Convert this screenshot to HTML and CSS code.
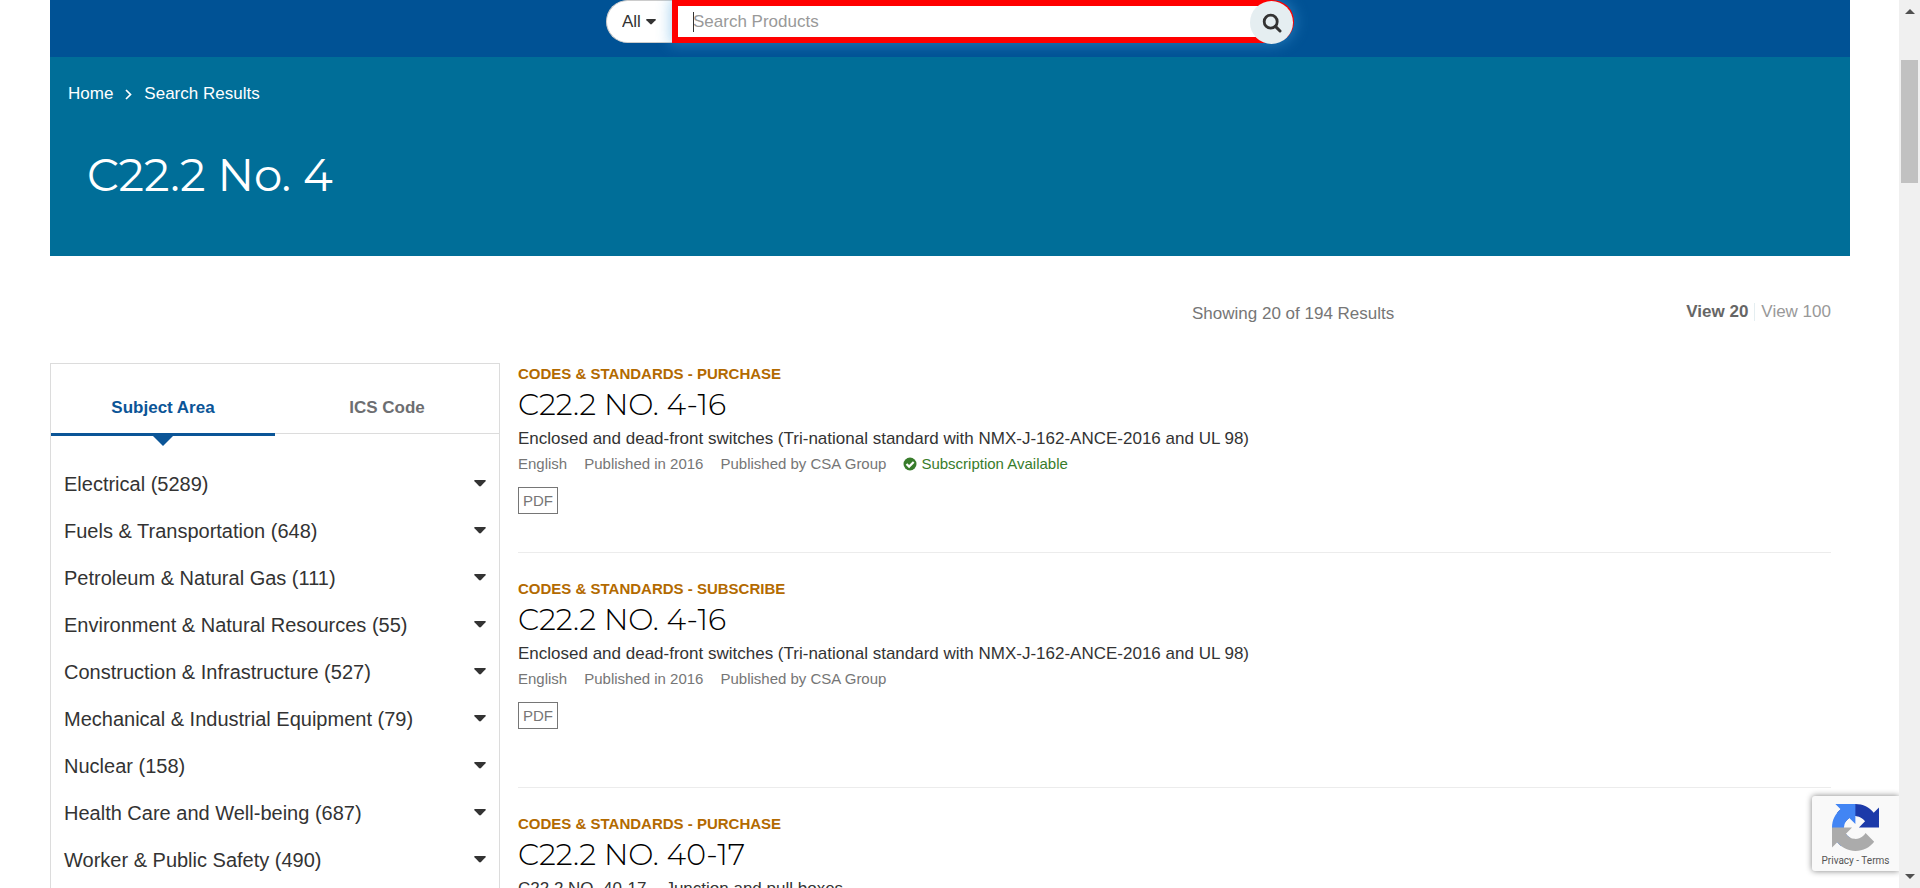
FILE: index.html
```html
<!DOCTYPE html>
<html lang="en">
<head>
<meta charset="utf-8">
<title>C22.2 No. 4 - Search Results</title>
<link rel="stylesheet" href="styles.css">
</head>
<body>
<svg class="defs" aria-hidden="true">
  <symbol id="caret" viewBox="0 0 12 7"><path d="M1 0h10q1.400.2.500 1.300L7 6q-1 .900-2 0L.5 1.300Q-.4.200 1 0z" fill="currentColor"/></symbol>
</svg>
<div class="window">
  <div class="page">
    <div class="container">
      <header class="topbar">
        <form class="search" role="search">
          <div class="scope">
            <select class="scope-select" aria-label="Search in"><option>All</option></select>
            <svg class="scope-caret"><use href="#caret"/></svg>
          </div>
          <div class="field">
            <input class="field-input" type="text" placeholder="Search Products" aria-label="Search Products">
            <button class="search-btn" type="button" aria-label="Search">
              <svg class="search-icon" viewBox="0 0 20 20"><circle cx="8.700" cy="8.700" r="6.500" fill="none" stroke="#333" stroke-width="2.800"/><path d="M13.400 13.400L18 18" stroke="#333" stroke-width="3" stroke-linecap="round"/></svg>
            </button>
          </div>
        </form>
      </header>
      <section class="hero">
        <nav class="crumbs" aria-label="Breadcrumb">
          <a href="#">Home</a>
          <svg class="crumb-sep" viewBox="0 0 7 11"><path d="M1 1l4.500 4.500L1 10" fill="none" stroke="#fff" stroke-width="1.700"/></svg>
          <a href="#">Search Results</a>
        </nav>
        <h1 class="hero-title">C22.2 No. 4</h1>
      </section>
      <div class="toolbar">
        <p class="count">Showing 20 of 194 Results</p>
        <nav class="views" aria-label="Results per page">
          <a class="view view-on" href="#">View 20</a>
          <a class="view" href="#">View 100</a>
        </nav>
      </div>
      <div class="columns">
        <aside class="filters">
          <div class="tabs" role="tablist">
            <button class="tab tab-on" role="tab" aria-selected="true">Subject Area</button>
            <button class="tab" role="tab" aria-selected="false">ICS Code</button>
          </div>
          <ul class="subjects">
            <li><button class="subject">Electrical (5289)<svg class="subject-caret"><use href="#caret"/></svg></button></li>
            <li><button class="subject">Fuels &amp; Transportation (648)<svg class="subject-caret"><use href="#caret"/></svg></button></li>
            <li><button class="subject">Petroleum &amp; Natural Gas (111)<svg class="subject-caret"><use href="#caret"/></svg></button></li>
            <li><button class="subject">Environment &amp; Natural Resources (55)<svg class="subject-caret"><use href="#caret"/></svg></button></li>
            <li><button class="subject">Construction &amp; Infrastructure (527)<svg class="subject-caret"><use href="#caret"/></svg></button></li>
            <li><button class="subject">Mechanical &amp; Industrial Equipment (79)<svg class="subject-caret"><use href="#caret"/></svg></button></li>
            <li><button class="subject">Nuclear (158)<svg class="subject-caret"><use href="#caret"/></svg></button></li>
            <li><button class="subject">Health Care and Well-being (687)<svg class="subject-caret"><use href="#caret"/></svg></button></li>
            <li><button class="subject">Worker &amp; Public Safety (490)<svg class="subject-caret"><use href="#caret"/></svg></button></li>
          </ul>
        </aside>
        <main class="results">
          <article class="result">
            <p class="kind">CODES &amp; STANDARDS - PURCHASE</p>
            <h2 class="name"><a href="#">C22.2 NO. 4-16</a></h2>
            <p class="desc">Enclosed and dead-front switches (Tri-national standard with NMX-J-162-ANCE-2016 and UL 98)</p>
            <p class="meta"><span>English</span><span>Published in 2016</span><span>Published by CSA Group</span><span class="avail"><svg class="check" viewBox="0 0 14 14"><circle cx="7" cy="7" r="6.500" fill="#387c2b"/><path d="M3.500 7l2.600 2.600 4.600-4.600" fill="none" stroke="#fff" stroke-width="2.200"/></svg>Subscription Available</span></p>
            <span class="format">PDF</span>
          </article>
          <article class="result">
            <p class="kind">CODES &amp; STANDARDS - SUBSCRIBE</p>
            <h2 class="name"><a href="#">C22.2 NO. 4-16</a></h2>
            <p class="desc">Enclosed and dead-front switches (Tri-national standard with NMX-J-162-ANCE-2016 and UL 98)</p>
            <p class="meta"><span>English</span><span>Published in 2016</span><span>Published by CSA Group</span></p>
            <span class="format">PDF</span>
          </article>
          <article class="result">
            <p class="kind">CODES &amp; STANDARDS - PURCHASE</p>
            <h2 class="name"><a href="#">C22.2 NO. 40-17</a></h2>
            <p class="desc">C22.2 NO. 40-17 – Junction and pull boxes</p>
          </article>
        </main>
      </div>
    </div>
    <aside class="captcha">
      <svg class="captcha-logo" viewBox="0 0 64 64"><path d="M64 31.955l-.033-1.370V4.687l-7.160 7.160C50.948 4.674 42.033.093 32.050.093c-10.389 0-19.622 4.960-25.458 12.640l11.736 11.860a15.550 15.550 0 0 1 4.754-5.334c2.050-1.600 4.952-2.906 8.968-2.906.485 0 .860.057 1.135.163 4.976.393 9.288 3.140 11.828 7.124l-8.307 8.307L64 31.953" fill="#1c3aa9"/><path d="M31.862.094l-1.370.033H4.594l7.160 7.160C4.580 13.147 0 22.060 0 32.046c0 10.388 4.960 19.622 12.640 25.458L24.500 45.768a15.550 15.550 0 0 1-5.334-4.754c-1.600-2.050-2.906-4.952-2.906-8.968 0-.485.057-.860.163-1.135.393-4.976 3.140-9.288 7.124-11.828l8.307 8.307L31.860.095" fill="#4285f4"/><path d="M.001 32.045l.033 1.370v25.898l7.160-7.160c5.860 7.173 14.774 11.754 24.760 11.754 10.388 0 19.622-4.960 25.458-12.640l-11.736-11.860a15.550 15.550 0 0 1-4.754 5.334c-2.050 1.600-4.952 2.906-8.968 2.906-.485 0-.860-.057-1.135-.163-4.976-.393-9.288-3.140-11.828-7.124l8.307-8.307c-10.522.040-22.400.066-27.295-.005" fill="#ababab"/></svg>
      <div class="captcha-links"><a href="#">Privacy</a> - <a href="#">Terms</a></div>
    </aside>
  </div>
  <div class="scrollbar" aria-hidden="true">
    <svg class="scroll-arrow" viewBox="0 0 10 5"><path d="M5 0l5 5H0z" fill="#505050"/></svg>
    <div class="thumb"></div>
    <svg class="scroll-arrow scroll-down" viewBox="0 0 10 5"><path d="M0 0h10L5 5z" fill="#505050"/></svg>
  </div>
</div>
</body>
</html>
```
FILE: styles.css
```css
* { box-sizing: border-box; }
body {
  margin: 0;
  background: #fff;
  color: #333;
  font-family: Arial, "Liberation Sans", sans-serif;
  font-size: 17px;
  line-height: 24px;
}
a { color: inherit; text-decoration: none; }
p, h1, h2, ul { margin: 0; padding: 0; }
ul { list-style: none; }
button, input, select { font: inherit; }
svg { display: block; flex: none; }
.defs { position: absolute; width: 0; height: 0; }

.window { display: flex; height: 100vh; overflow: hidden; }
.page { position: relative; flex: 1; min-width: 0; overflow: hidden; }
.container { padding: 0 49px 0 50px; }

.topbar { display: flex; justify-content: center; height: 57px; background: #005295; }
.search { display: flex; width: 688px; height: 43px; }
.scope { position: relative; display: flex; align-items: center; width: 66px; background: #fff; border-radius: 22px 0 0 22px; border: 1px solid #ccc; border-right: 0; }
.scope-select { appearance: none; width: 100%; height: 100%; padding: 0 0 0 15px; border: 0; background: none; color: #333; }
.scope-caret { position: absolute; right: 16px; width: 10px; height: 6px; pointer-events: none; }
.field { position: relative; flex: 1; border: 6px solid #f00; border-right-width: 22px; border-radius: 0 22px 22px 0; background: #fff; box-shadow: 0 0 14px 2px rgba(74, 163, 223, .45); }
.field::after { content: ""; position: absolute; left: 15px; top: 6px; width: 1px; height: 20px; background: #333; }
.field-input { display: block; width: 100%; height: 100%; padding: 0 15px; border: 0; outline: 0; background: #fff; }
.field-input::placeholder { color: #999; opacity: 1; }
.search-btn { position: absolute; top: -5px; right: -21px; display: grid; place-items: center; width: 43px; height: 43px; padding: 0; border: 0; border-radius: 50%; background: #e5eef1; }
.search-icon { width: 20px; height: 20px; }

.hero { height: 199px; padding: 25px 18px; background: #006e98; color: #fff; }
.crumbs { display: flex; align-items: center; gap: 12px; }
.crumb-sep { width: 7px; height: 11px; }
.hero-title { padding: 41px 19px 0; font: 400 45px/56px Montserrat, Inter, sans-serif; }

.toolbar { display: flex; justify-content: flex-end; gap: 292px; padding: 44px 19px 0 0; height: 107px; color: #767676; }
.count { padding-top: 2px; }
.views { display: flex; align-items: center; height: 24px; }
.view { line-height: 18px; color: #999; }
.view-on { margin-right: 6px; padding-right: 6px; border-right: 1px solid #e5eef1; color: #666; font-weight: bold; }

.columns { display: grid; grid-template-columns: 1fr 3fr; }
.filters { border: 1px solid #dcdcdc; padding-bottom: 60px; }
.tabs { display: grid; grid-template-columns: 1fr 1fr; }
.tab { position: relative; height: 70px; padding: 18px 0 0; border: 0; border-bottom: 1px solid #dcdcdc; background: none; color: #6d6e71; font-weight: bold; }
.tab-on { height: 72px; margin-bottom: -2px; border-bottom: 3px solid #0b5597; color: #0b5597; }
.tab-on::after { content: ""; position: absolute; left: 50%; top: 100%; margin: 2px 0 0 -11px; border: 11px solid transparent; border-top-color: #0b5597; border-bottom: 0; }
.subjects { padding: 26px 13px 0; }
.subject { display: flex; justify-content: space-between; align-items: center; width: 100%; height: 47px; padding: 0; border: 0; background: none; color: #333; font-size: 20px; text-align: left; }
.subject-caret { width: 12px; height: 7px; }

.results { padding: 0 19px 0 18px; }
.result { height: 190px; border-bottom: 1px solid #ececec; }
.result + .result { height: 235px; padding-top: 25px; }
.kind { color: #b36a00; font-size: 15px; line-height: 22px; font-weight: bold; }
.name { margin-bottom: 1px; color: #000; font: 300 30px/40px Montserrat, Inter, sans-serif; }
.desc { line-height: 26px; }
.meta { display: flex; gap: 17px; color: #767676; font-size: 15px; }
.avail { display: flex; align-items: center; gap: 4px; color: #387c2b; }
.check { width: 14px; height: 14px; }
.format { display: inline-block; margin-top: 11px; padding: 0 4px; border: 1px solid #767676; color: #767676; font-size: 15px; line-height: 25px; }

.captcha { position: absolute; right: 0; bottom: 17px; display: flex; flex-direction: column; align-items: center; width: 87px; height: 75px; padding: 8px 0 0; border-radius: 3px 0 0 3px; background: #f9f9f9; box-shadow: 0 0 6px #808080; color: #555; font: 10px/20px Roboto, sans-serif; }
.captcha-logo { width: 47px; height: 47px; }

.scrollbar { display: flex; flex-direction: column; align-items: center; width: 21px; padding: 9px 0; background: #f0f0f0; }
.scroll-arrow { width: 10px; height: 5px; }
.thumb { width: 17px; height: 123px; margin-top: 46px; background: #c1c1c1; }
.scroll-down { margin-top: auto; }
```
